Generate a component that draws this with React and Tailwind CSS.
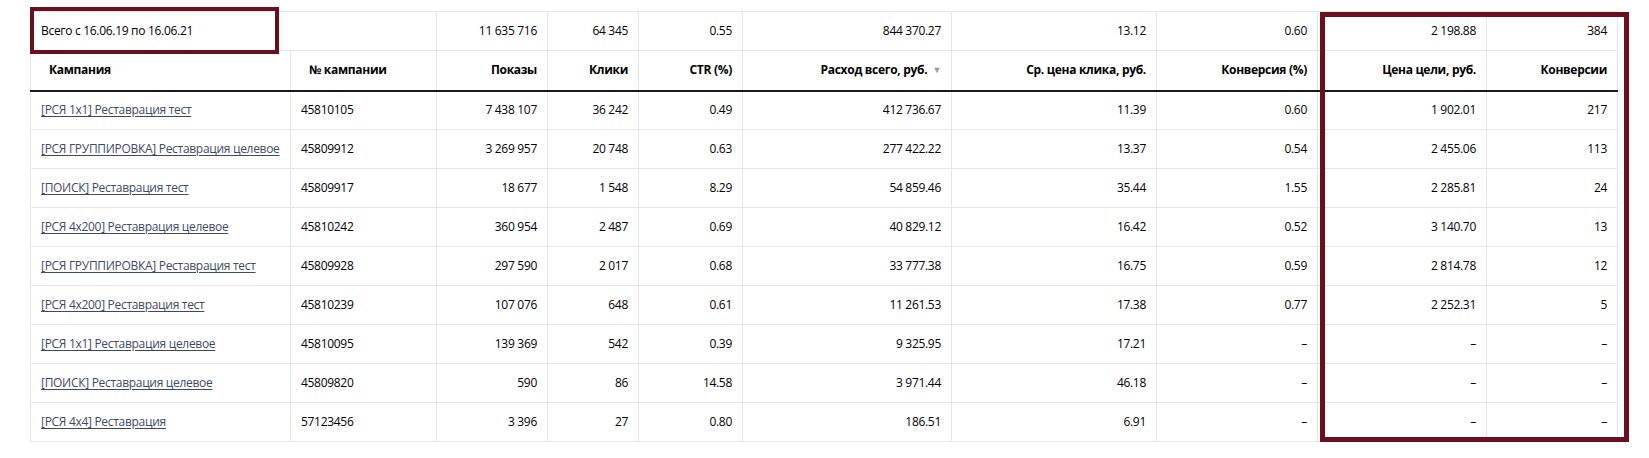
import React from "react";

const n = (s) => s.replace(/ /g, "\u00A0");

const columns = [
  { title: "Кампания", width: 260, align: "left" },
  { title: "№ кампании", width: 146, align: "left" },
  { title: "Показы", width: 111 },
  { title: "Клики", width: 91 },
  { title: "CTR (%)", width: 104 },
  { title: "Расход всего, руб.", width: 209, sorted: true },
  { title: "Ср. цена клика, руб.", width: 205 },
  { title: "Конверсия (%)", width: 161 },
  { title: "Цена цели, руб.", width: 169 },
  { title: "Конверсии", width: 131 },
];

const total = ["11 635 716", "64 345", "0.55", "844 370.27", "13.12", "0.60", "2 198.88", "384"];

const rows = [
  ["[РСЯ 1x1] Реставрация тест", "45810105", "7 438 107", "36 242", "0.49", "412 736.67", "11.39", "0.60", "1 902.01", "217"],
  ["[РСЯ ГРУППИРОВКА] Реставрация целевое", "45809912", "3 269 957", "20 748", "0.63", "277 422.22", "13.37", "0.54", "2 455.06", "113"],
  ["[ПОИСК] Реставрация тест", "45809917", "18 677", "1 548", "8.29", "54 859.46", "35.44", "1.55", "2 285.81", "24"],
  ["[РСЯ 4x200] Реставрация целевое", "45810242", "360 954", "2 487", "0.69", "40 829.12", "16.42", "0.52", "3 140.70", "13"],
  ["[РСЯ ГРУППИРОВКА] Реставрация тест", "45809928", "297 590", "2 017", "0.68", "33 777.38", "16.75", "0.59", "2 814.78", "12"],
  ["[РСЯ 4x200] Реставрация тест", "45810239", "107 076", "648", "0.61", "11 261.53", "17.38", "0.77", "2 252.31", "5"],
  ["[РСЯ 1x1] Реставрация целевое", "45810095", "139 369", "542", "0.39", "9 325.95", "17.21", "–", "–", "–"],
  ["[ПОИСК] Реставрация целевое", "45809820", "590", "86", "14.58", "3 971.44", "46.18", "–", "–", "–"],
  ["[РСЯ 4x4] Реставрация", "57123456", "3 396", "27", "0.80", "186.51", "6.91", "–", "–", "–"],
];

const cell = "h-[39px] border border-[#e6e6e6] px-[10px] align-middle whitespace-nowrap";

export default function App() {
  return (
    <div
      className="relative bg-white pl-[30px] pt-[11px] w-[1649px] h-[458px] text-[12px] tracking-[-0.3px] text-black"
      style={{ fontFamily: '"Open Sans", "Noto Sans", sans-serif' }}
    >
      <table className="table-fixed border-collapse w-[1587px]">
        <colgroup>
          {columns.map((c, i) => (
            <col key={i} style={{ width: c.width }} />
          ))}
        </colgroup>
        <thead>
          <tr>
            <td colSpan={2} className={`${cell} text-left`}>
              Всего с 16.06.19 по 16.06.21
            </td>
            {total.map((v, i) => (
              <td key={i} className={`${cell} text-right`}>
                {n(v)}
              </td>
            ))}
          </tr>
          <tr>
            {columns.map((c, i) => (
              <th
                key={i}
                className={`h-[40px] border border-[#e6e6e6] border-b-2 border-b-[#1a1a1a] align-middle whitespace-nowrap font-bold ${
                  c.align === "left" ? "text-left pl-[18px] pr-[10px]" : "text-right px-[10px]"
                }`}
              >
                {c.title}
                {c.sorted && <span className="ml-[5px] text-[9px] text-[#9a9a9a] relative top-[-1px]">▼</span>}
              </th>
            ))}
          </tr>
        </thead>
        <tbody>
          {rows.map((r, ri) => (
            <tr key={ri}>
              {r.map((v, i) => (
                <td key={i} className={`${cell} ${i < 2 ? "text-left" : "text-right"}`}>
                  {i === 0 ? (
                    <a href="#" className="text-[#3c4a66] underline underline-offset-2 decoration-[#3c4a66]">
                      {v}
                    </a>
                  ) : (
                    n(v)
                  )}
                </td>
              ))}
            </tr>
          ))}
        </tbody>
      </table>

      <div className="absolute left-[30px] top-[7px] w-[249px] h-[47px] border-[4px] border-[#6b0f1f] pointer-events-none" />
      <div className="absolute left-[1320px] top-[12px] w-[309px] h-[430px] border-[5px] border-[#6b0f1f] pointer-events-none" />
    </div>
  );
}
